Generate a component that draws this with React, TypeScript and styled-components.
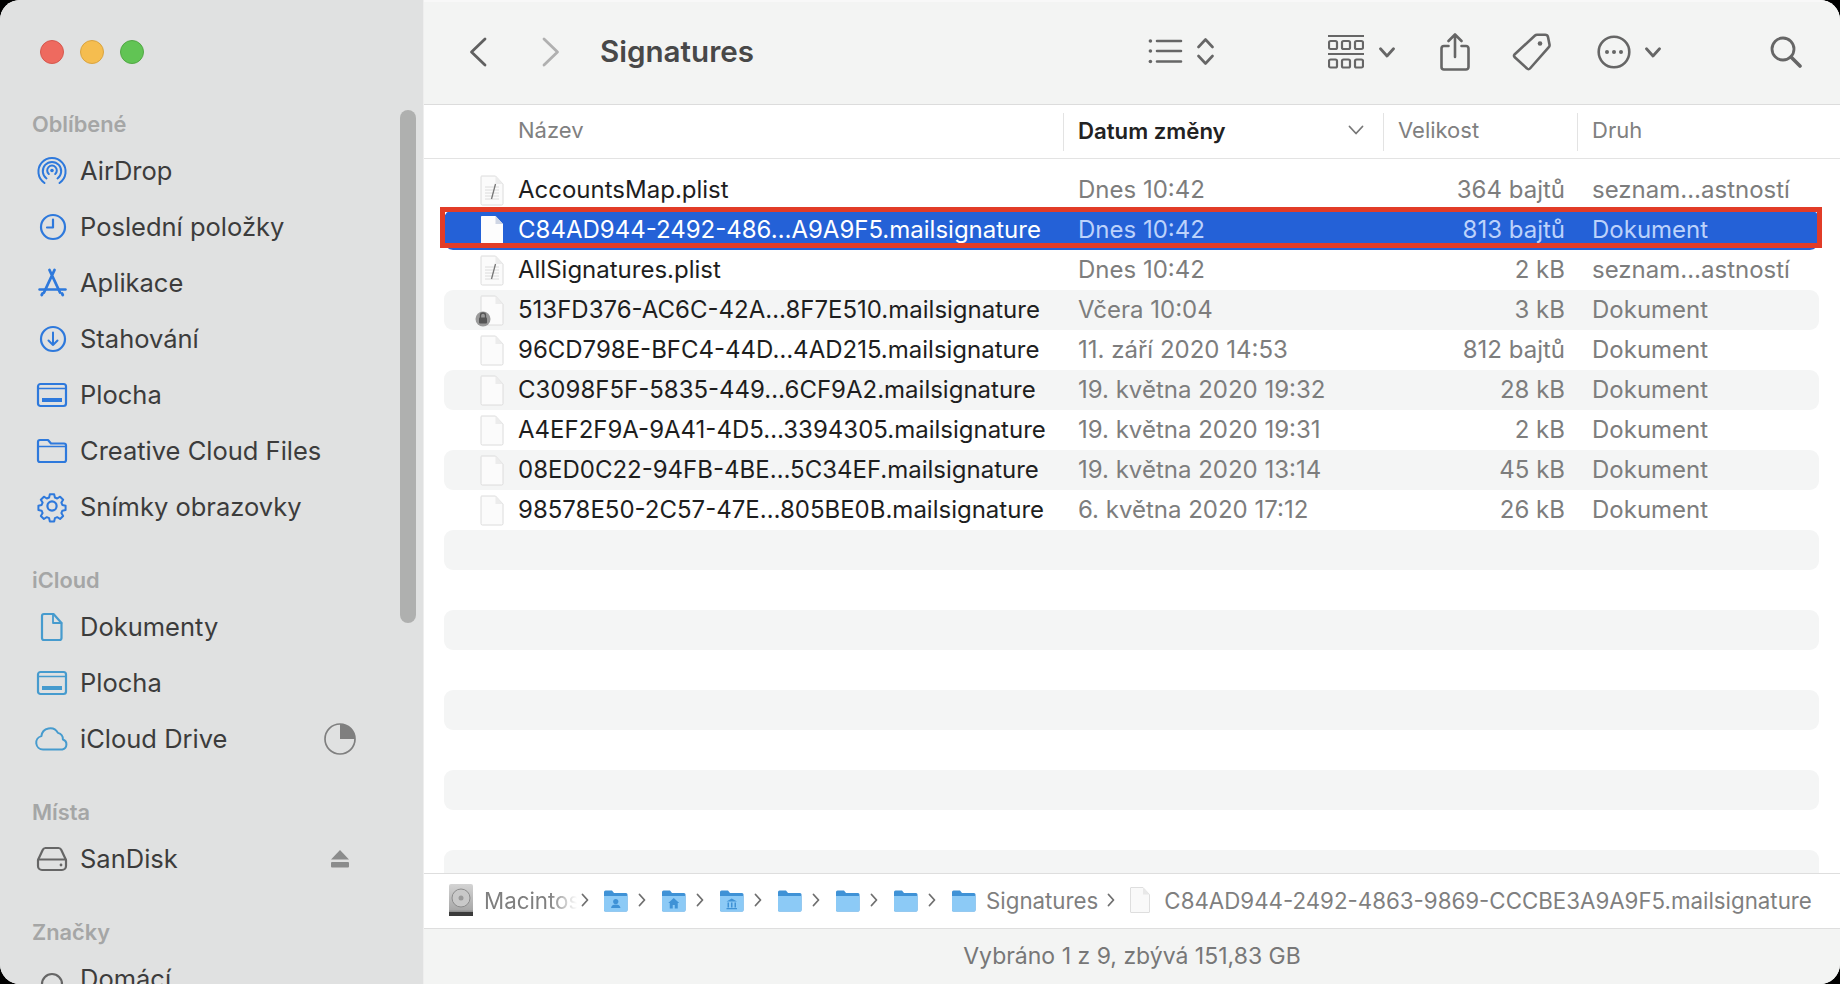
import React from "react";
import styled, { createGlobalStyle, css } from "styled-components";

const Global = createGlobalStyle`
  html, body { margin: 0; padding: 0; background: #000; }
  body { width: 1840px; height: 984px; overflow: hidden; font-family: Inter, "Liberation Sans", sans-serif; -webkit-font-smoothing: antialiased; }
  #root { width: 1840px; height: 984px; }
`;

const Window = styled.div`
  width: 1840px; height: 984px; display: flex; overflow: hidden; border-radius: 20px; background: #fff;
`;
const Sidebar = styled.aside`
  position: relative; width: 424px; height: 984px; flex: none; box-sizing: border-box; background: #e0e1e1;
  border-right: 1px solid #eeeeee; overflow: hidden; padding-top: 105px; display: flex; flex-direction: column; gap: 26px;
`;
const Lights = styled.div`
  position: absolute; left: 40px; top: 40px; display: flex; gap: 16px;
`;
const Light = styled.span<{ $c: string; $b: string }>`
  width: 24px; height: 24px; border-radius: 50%; box-sizing: border-box; background: ${p => p.$c}; border: 1px solid ${p => p.$b};
`;
const Scroll = styled.div`
  position: absolute; left: 400px; top: 110px; width: 16px; height: 513px; border-radius: 8px; background: #afb0af;
`;
const Section = styled.section`
  display: flex; flex-direction: column;
`;
const SectionLabel = styled.div`
  height: 38px; line-height: 38px; padding-left: 32px; font-size: 21.8px; font-weight: 600; color: #a5a6a6;
`;
const Item = styled.div`
  height: 56px; flex: none; display: flex; align-items: center; position: relative; padding-left: 34px; gap: 10px;
  font-size: 25.5px; color: #3c3c3c;
`;
const ItemText = styled.span`
  margin-bottom: 2px;
`;
const ItemIcon = styled.span`
  width: 36px; height: 36px; flex: none; display: flex; align-items: center; justify-content: center;
`;
const Trail = styled.span`
  position: absolute; left: 322px; top: 10px; width: 36px; height: 36px; display: flex; align-items: center; justify-content: center;
`;

const Main = styled.main`
  flex: 1; min-width: 0; height: 984px; display: flex; flex-direction: column;
`;
const Toolbar = styled.header`
  height: 105px; flex: none; box-sizing: border-box; background: #f3f4f3; border-top: 2px solid #f8f8f8; border-bottom: 1.5px solid #dcdcdc; position: relative;
`;
const Tool = styled.span<{ $l: number }>`
  position: absolute; left: ${p => p.$l}px; top: 0; height: 100px; display: flex; align-items: center;
`;
const Title = styled.h1`
  margin: 0; position: absolute; left: 176px; top: 0; line-height: 98px; font-size: 29.6px; font-weight: 600; color: #484848;
`;
const Head = styled.div`
  height: 54px; flex: none; box-sizing: border-box; border-bottom: 1.5px solid #e3e3e3; display: grid; grid-template-columns: 639px 320px 194px 1fr; align-items: center;
  background: #fff;
`;
const HeadCell = styled.div<{ $first?: boolean; $active?: boolean }>`
  height: 38px; box-sizing: border-box; display: flex; align-items: center; justify-content: space-between;
  padding-left: ${p => (p.$first ? 94 : 14)}px; padding-right: 19px; padding-bottom: 3px;
  border-left: ${p => (p.$first ? "none" : "1.5px solid #e3e3e3")};
  font-size: ${p => (p.$active ? 22.2 : 22)}px; font-weight: ${p => (p.$active ? 600 : 400)}; color: ${p => (p.$active ? "#222" : "#808080")};
`;
const List = styled.div`
  flex: 1; min-height: 0; overflow: hidden; padding: 11px 21px 0 20px; display: flex; flex-direction: column;
`;
const Row = styled.div<{ $stripe?: boolean; $sel?: boolean }>`
  position: relative; height: 40px; flex: none; border-radius: 9px; display: grid; align-items: center;
  grid-template-columns: 36px 38px 560px 486px 27px 1fr;
  background: ${p => (p.$sel ? "#2461d7" : p.$stripe ? "#f4f5f5" : "#fff")};
  font-size: 24px; white-space: nowrap;
  color: ${p => (p.$sel ? "#bcd2fb" : "#7d7d7d")};
`;
const cellText = css`
  grid-row: 1; margin-bottom: 2px;
`;
const RowIcon = styled.span`
  grid-column: 2; grid-row: 1; display: flex; align-items: center; height: 40px;
`;
const Name = styled.span<{ $sel?: boolean }>`
  ${cellText}
  grid-column: 3; color: ${p => (p.$sel ? "#fff" : "#1e1e1e")};
`;
const DateCell = styled.span`
  ${cellText}
  grid-column: 4;
`;
const Size = styled.span`
  ${cellText}
  grid-column: 4 / 6; justify-self: end; margin-right: 26px;
`;
const Kind = styled.span`
  ${cellText}
  grid-column: 6; margin-left: 1px;
`;
const Mark = styled.div`
  position: absolute; left: -4px; right: -3px; top: -3px; bottom: 2px; border: 5px solid #e23c27; pointer-events: none;
`;
const PathBar = styled.div`
  height: 56px; flex: none; box-sizing: border-box; border-top: 1.5px solid #dedede; border-bottom: 1.5px solid #dedede; background: #fff;
  display: flex; align-items: center; padding: 0 0 2px 24px; font-size: 22.3px; color: #7f7f7f; white-space: nowrap;
`;
const Crumb = styled.span`
  display: flex; align-items: center; flex: none;
`;
const FadeText = styled.span`
  width: 93px; margin-left: 10px; overflow: hidden;
  -webkit-mask-image: linear-gradient(90deg, #000 70%, transparent 100%);
  mask-image: linear-gradient(90deg, #000 70%, transparent 100%);
`;
const CrumbText = styled.span<{ $gap: number }>`
  margin-left: ${p => p.$gap}px;
`;
const Sep = styled.svg<{ $l: number; $r: number }>`
  width: 8px; height: 14px; flex: none; margin-left: ${p => p.$l}px; margin-right: ${p => p.$r}px;
`;
const Status = styled.footer`
  height: 55px; flex: none; background: #f3f4f3; display: flex; align-items: center; justify-content: center; font-size: 23px; color: #777; padding-bottom: 2px; box-sizing: border-box;
`;

const blue = "#2e79dc";
const teal = "#469bce";

const Svg = ({ w = 34, h = 34, c = blue, sw = 2.2, children }: { w?: number; h?: number; c?: string; sw?: number; children: React.ReactNode }) => (
  <svg width={w} height={h} viewBox={`0 0 ${w} ${h}`} fill="none" stroke={c} strokeWidth={sw} strokeLinecap="round" strokeLinejoin="round">{children}</svg>
);

const AirDropI = () => (
  <Svg sw={2}><path d="M9.5 29a13.6 13.6 0 1 1 15 0" /><path d="M11.5 24.5a9.2 9.2 0 1 1 11 0" /><path d="M13.8 20a4.8 4.8 0 1 1 6.4 0" /><circle cx="17" cy="16.5" r="1.8" fill={blue} stroke="none" /></Svg>
);
const ClockI = () => (
  <Svg><circle cx="18" cy="17" r="12" /><path d="M18 9.5v8h-6" /></Svg>
);
const AppI = () => (
  <Svg><path d="M14.5 4l10.5 22.5M19.5 4L9 26.5" strokeWidth="2.8" /><path d="M4.5 23.5h26" strokeWidth="2.5" /><path d="M7.5 27.5l-.8 1.5M27 27.5l.8 1.5" strokeWidth="2.8" /></Svg>
);
const DownI = () => (
  <Svg><circle cx="18" cy="17" r="12" /><path d="M18 10.5v12.5M13.5 18.5l4.5 4.5 4.5-4.5" strokeWidth="2" /></Svg>
);
const DesktopI = ({ c = blue }: { c?: string }) => (
  <Svg c={c}><rect x="3" y="6" width="28" height="22" rx="2.5" /><path d="M3 10.5h28" strokeWidth="1.5" /><rect x="7" y="20" width="20" height="4" fill={c} stroke="none" /></Svg>
);
const FolderI = () => (
  <Svg><path d="M3 26V8a2 2 0 0 1 2-2h8l3 3.5h13a2 2 0 0 1 2 2V26a2 2 0 0 1-2 2H5a2 2 0 0 1-2-2z" /><path d="M3 12.5h28" strokeWidth="1.6" /></Svg>
);
const GearI = () => (
  <Svg sw={2.2}><path d="M14.6 4.5h4.8l.8 3.6 2.6 1.1 3.2-2 3.4 3.4-2 3.2 1.1 2.6 3.6.8v4.8l-3.6.8-1.1 2.6 2 3.2-3.4 3.4-3.2-2-2.6 1.1-.8 3.6h-4.8l-.8-3.6-2.6-1.1-3.2 2-3.4-3.4 2-3.2-1.1-2.6-3.6-.8v-4.8l3.6-.8 1.1-2.6-2-3.2 3.4-3.4 3.2 2 2.6-1.1z" transform="translate(1.7 .2) scale(.9)" /><circle cx="17" cy="16" r="4.6" /></Svg>
);
const DocI = () => (
  <Svg c={teal}><path d="M9 4h9.5l8 9v15a2 2 0 0 1-2 2H9a2 2 0 0 1-2-2V6a2 2 0 0 1 2-2z" /><path d="M18 4v9h8.5" strokeWidth="1.8" /></Svg>
);
const CloudI = () => (
  <Svg w={36} c={teal}><path d="M9 27.5a6.8 6.8 0 0 1-1.6-13.4 8.8 8.8 0 0 1 16.5-3.2 6.6 6.6 0 0 1 5 6.6 5.2 5.2 0 0 1-.6 10H9z" strokeWidth="2" /></Svg>
);
const DiskI = () => (
  <Svg c="#666" sw={2.2}><path d="M10.5 6h13a3 3 0 0 1 2.7 1.8L31 18v6a4 4 0 0 1-4 4H7a4 4 0 0 1-4-4v-6l4.8-10.2A3 3 0 0 1 10.5 6z" /><path d="M3.5 17.5h27" /><circle cx="26" cy="23" r="1.4" fill="#666" stroke="none" /></Svg>
);
const TagDotI = () => (
  <Svg c="#666"><circle cx="17" cy="22" r="10" /></Svg>
);
const PieI = () => (
  <svg width="34" height="34" viewBox="0 0 34 34"><circle cx="17" cy="17" r="15" fill="none" stroke="#7f7f7f" strokeWidth="1.7" /><path d="M17 2a15 15 0 0 1 15 15H17z" fill="#7f7f7f" /></svg>
);
const EjectI = () => (
  <svg width="20" height="18" viewBox="0 0 20 18" fill="#8b8c8c"><path d="M10 0l9 9.5H1z" /><rect x="1" y="12" width="18" height="5.5" rx="1" /></svg>
);

const Back = () => (
  <svg width="20" height="32" viewBox="0 0 20 32" fill="none" stroke="#606060" strokeWidth="2.8" strokeLinecap="round" strokeLinejoin="round"><path d="M17 3L3.5 16 17 29" /></svg>
);
const Forward = () => (
  <svg width="20" height="32" viewBox="0 0 20 32" fill="none" stroke="#b0b0b0" strokeWidth="2.8" strokeLinecap="round" strokeLinejoin="round"><path d="M3 3l13.5 13L3 29" /></svg>
);
const ListI = () => (
  <svg width="66" height="30" viewBox="0 0 66 30" fill="none" stroke="#666" strokeWidth="2.6" strokeLinecap="round" strokeLinejoin="round">
    <path d="M9 4h24M9 14h24M9 24.5h24" /><circle cx="2.4" cy="4" r="1.8" fill="#666" stroke="none" /><circle cx="2.4" cy="14" r="1.8" fill="#666" stroke="none" /><circle cx="2.4" cy="24.5" r="1.8" fill="#666" stroke="none" />
    <path d="M50.5 10l7-7.5 7 7.5M50.5 19l7 7.5 7-7.5" />
  </svg>
);
const Chev = () => (
  <svg width="16" height="11" viewBox="0 0 16 11" fill="none" stroke="#666" strokeWidth="2.8" strokeLinecap="round" strokeLinejoin="round"><path d="M1.5 1.8L8 9l6.5-7.2" /></svg>
);
const GridI = () => (
  <svg width="36" height="34" viewBox="0 0 36 34" fill="none" stroke="#666" strokeWidth="2.2">
    <path d="M0 1h36M0 19h36" />
    {[0, 13, 26].map(x => <rect key={x} x={x + 1} y="6" width="8" height="8" rx="1.6" />)}
    {[0, 13, 26].map(x => <rect key={x + 100} x={x + 1} y="24.5" width="8" height="8" rx="1.6" />)}
  </svg>
);
const ShareI = () => (
  <svg width="30" height="38" viewBox="0 0 30 38" fill="none" stroke="#666" strokeWidth="2.6" strokeLinecap="round" strokeLinejoin="round">
    <path d="M8.5 13H4a2.5 2.5 0 0 0-2.5 2.5v18.500A2.5 2.5 0 0 0 4 36.500h22a2.5 2.5 0 0 0 2.5-2.5V15.500A2.5 2.5 0 0 0 26 13h-4.500" />
    <path d="M15 24V2M8.5 8L15 1.500 21.500 8" />
  </svg>
);
const TagI = () => (
  <svg width="40" height="38" viewBox="0 0 40 38" fill="none" stroke="#666" strokeWidth="2.6" strokeLinejoin="round">
    <path d="M2.5 21.500L23 2.500a3 3 0 0 1 2-.8h8a3 3 0 0 1 3 2.300l1.500 7.500a3 3 0 0 1-.9 2.800L18 35.500a2 2 0 0 1-3 0L2.500 24a2 2 0 0 1 0-2.500z" />
    <circle cx="28" cy="10.500" r="2.300" fill="#666" stroke="none" />
  </svg>
);
const MoreI = () => (
  <svg width="34" height="34" viewBox="0 0 34 34" fill="none" stroke="#666" strokeWidth="2.6">
    <circle cx="17" cy="17" r="15.300" />
    <circle cx="10" cy="17" r="2" fill="#666" stroke="none" /><circle cx="17" cy="17" r="2" fill="#666" stroke="none" /><circle cx="24" cy="17" r="2" fill="#666" stroke="none" />
  </svg>
);
const SearchI = () => (
  <svg width="32" height="32" viewBox="0 0 32 32" fill="none" stroke="#666" strokeWidth="2.8" strokeLinecap="round">
    <circle cx="13" cy="13" r="11" /><path d="M21 21l9 9" strokeWidth="3.6" />
  </svg>
);
const SortChev = () => (
  <svg width="16" height="10" viewBox="0 0 16 10" fill="none" stroke="#777" strokeWidth="1.8" strokeLinecap="round" strokeLinejoin="round"><path d="M1.5 1.5L8 8.500l6.500-7" /></svg>
);

const FileIcon = ({ kind }: { kind: "doc" | "plist" | "lock" | "sel" }) => (
  <svg width="24" height="31" viewBox="0 0 24 31" style={{ overflow: "visible" }}>
    <path d="M1.5 1h14L23 9v19.500a1.5 1.5 0 0 1-1.5 1.500h-19A1.5 1.5 0 0 1 1 28.500V2a1 1 0 0 1 .5-1z" fill={kind === "sel" ? "#fdfdfd" : "#fbfbfb"} stroke={kind === "sel" ? "none" : "#dcdcdc"} />
    <path d="M15.5 1v8H23z" fill={kind === "sel" ? "#cfd6e4" : "#ececec"} />
    {kind === "plist" && (
      <g>
        <path d="M5 12h14M5 15h14M5 18h14M5 21h14M5 24h14" stroke="#dcdcdc" strokeWidth="1" />
        <path d="M15.5 9L11.500 24" stroke="#777" strokeWidth="1.3" />
      </g>
    )}
    {kind === "lock" && (
      <g>
        <circle cx="3" cy="24" r="7.500" fill="#9a9a9a" />
        <path d="M0.5 23v-2.500a2.5 2.5 0 0 1 5 0V23" fill="none" stroke="#555" strokeWidth="1.3" />
        <rect x="-1" y="22.500" width="8" height="6" rx="1" fill="#555" />
      </g>
    )}
  </svg>
);

const CrumbFolder = ({ g }: { g?: "user" | "home" | "lib" }) => (
  <svg width="25" height="25" viewBox="0 0 25 25">
    <path d="M1 4a1.5 1.5 0 0 1 1.5-1.500h6.500l2 2.500h12A1.5 1.5 0 0 1 24.500 6.500V22a1.5 1.5 0 0 1-1.5 1.500H2.500A1.5 1.5 0 0 1 1 22z" fill="#3f92d6" />
    <path d="M1 8h23.500v14a1.5 1.5 0 0 1-1.5 1.500H2.500A1.5 1.5 0 0 1 1 22z" fill="#8ccaf6" />
    {g === "user" && (<g fill="#3f92d6"><circle cx="12.750" cy="13.500" r="2.600" /><path d="M8 20a4.800 4 0 0 1 9.500 0z" /></g>)}
    {g === "home" && (<path d="M12.750 10l5.500 5h-1.500v5.500h-3V17h-2v3.500h-3V15h-1.500z" fill="#3f92d6" />)}
    {g === "lib" && (<path d="M7.500 13.500l5.250-3 5.250 3zM8.500 14.500h1.500v5h-1.500zM12 14.500h1.500v5H12zM15.500 14.500H17v5h-1.500zM7.500 20h10.500v1.200H7.500z" fill="#3f92d6" />)}
  </svg>
);
const HddI = () => (
  <svg width="26" height="34" viewBox="0 0 26 34">
    <defs><linearGradient id="hd" x1="0" y1="0" x2="0" y2="1"><stop offset="0" stopColor="#d4d4d4" /><stop offset=".8" stopColor="#a9a9a9" /><stop offset="1" stopColor="#555" /></linearGradient></defs>
    <rect x="1" y="1" width="24" height="32" rx="2" fill="url(#hd)" />
    <circle cx="13" cy="15" r="9" fill="#c9c9c9" stroke="#8d8d8d" />
    <circle cx="13" cy="15" r="2.500" fill="#9a9a9a" />
    <rect x="1" y="29" width="24" height="4" fill="#3a3a3a" />
  </svg>
);
const FileSmall = () => (
  <svg width="20" height="26" viewBox="0 0 20 26">
    <path d="M1 .5h12l6.500 7V25a.5.5 0 0 1-.5.5H1a.5.5 0 0 1-.5-.5V1A.5.5 0 0 1 1 .5z" fill="#f9f9f9" stroke="#dedede" />
    <path d="M13 .5v7h6.500z" fill="#e8e8e8" />
  </svg>
);
const PathChev = ({ l, r }: { l: number; r: number }) => (
  <Sep $l={l} $r={r} viewBox="0 0 8 14" fill="none" stroke="#6f6f6f" strokeWidth="1.8" strokeLinecap="round" strokeLinejoin="round"><path d="M1.5 1.500L6.500 7l-5 5.500" /></Sep>
);

type F = { name: string; date: string; size: string; kind: string; icon: "doc" | "plist" | "lock" | "sel" };
const files: F[] = [
  { name: "AccountsMap.plist", date: "Dnes 10:42", size: "364 bajtů", kind: "seznam…astností", icon: "plist" },
  { name: "C84AD944-2492-486…A9A9F5.mailsignature", date: "Dnes 10:42", size: "813 bajtů", kind: "Dokument", icon: "sel" },
  { name: "AllSignatures.plist", date: "Dnes 10:42", size: "2 kB", kind: "seznam…astností", icon: "plist" },
  { name: "513FD376-AC6C-42A…8F7E510.mailsignature", date: "Včera 10:04", size: "3 kB", kind: "Dokument", icon: "lock" },
  { name: "96CD798E-BFC4-44D…4AD215.mailsignature", date: "11. září 2020 14:53", size: "812 bajtů", kind: "Dokument", icon: "doc" },
  { name: "C3098F5F-5835-449…6CF9A2.mailsignature", date: "19. května 2020 19:32", size: "28 kB", kind: "Dokument", icon: "doc" },
  { name: "A4EF2F9A-9A41-4D5…3394305.mailsignature", date: "19. května 2020 19:31", size: "2 kB", kind: "Dokument", icon: "doc" },
  { name: "08ED0C22-94FB-4BE…5C34EF.mailsignature", date: "19. května 2020 13:14", size: "45 kB", kind: "Dokument", icon: "doc" },
  { name: "98578E50-2C57-47E…805BE0B.mailsignature", date: "6. května 2020 17:12", size: "26 kB", kind: "Dokument", icon: "doc" },
];

const SideItem = ({ icon, label, trail }: { icon: React.ReactNode; label: string; trail?: React.ReactNode }) => (
  <Item><ItemIcon>{icon}</ItemIcon><ItemText>{label}</ItemText>{trail && <Trail>{trail}</Trail>}</Item>
);

export default function App() {
  return (
    <Window>
      <Global />
      <Sidebar>
        <Lights>
          <Light $c="#ee6a5f" $b="#d5584e" />
          <Light $c="#f5bd4f" $b="#d9a441" />
          <Light $c="#61c454" $b="#52a845" />
        </Lights>
        <Section>
          <SectionLabel>Oblíbené</SectionLabel>
          <SideItem icon={<AirDropI />} label="AirDrop" />
          <SideItem icon={<ClockI />} label="Poslední položky" />
          <SideItem icon={<AppI />} label="Aplikace" />
          <SideItem icon={<DownI />} label="Stahování" />
          <SideItem icon={<DesktopI />} label="Plocha" />
          <SideItem icon={<FolderI />} label="Creative Cloud Files" />
          <SideItem icon={<GearI />} label="Snímky obrazovky" />
        </Section>
        <Section>
          <SectionLabel>iCloud</SectionLabel>
          <SideItem icon={<DocI />} label="Dokumenty" />
          <SideItem icon={<DesktopI c={teal} />} label="Plocha" />
          <SideItem icon={<CloudI />} label="iCloud Drive" trail={<PieI />} />
        </Section>
        <Section>
          <SectionLabel>Místa</SectionLabel>
          <SideItem icon={<DiskI />} label="SanDisk" trail={<EjectI />} />
        </Section>
        <Section>
          <SectionLabel>Značky</SectionLabel>
          <SideItem icon={<TagDotI />} label="Domácí" />
        </Section>
        <Scroll />
      </Sidebar>
      <Main>
        <Toolbar>
          <Tool $l={44}><Back /></Tool>
          <Tool $l={117}><Forward /></Tool>
          <Title>Signatures</Title>
          <Tool $l={724}><ListI /></Tool>
          <Tool $l={904}><GridI /></Tool>
          <Tool $l={955}><Chev /></Tool>
          <Tool $l={1016}><ShareI /></Tool>
          <Tool $l={1088}><TagI /></Tool>
          <Tool $l={1173}><MoreI /></Tool>
          <Tool $l={1221}><Chev /></Tool>
          <Tool $l={1346}><SearchI /></Tool>
        </Toolbar>
        <Head>
          <HeadCell $first>Název</HeadCell>
          <HeadCell $active>Datum změny<SortChev /></HeadCell>
          <HeadCell>Velikost</HeadCell>
          <HeadCell>Druh</HeadCell>
        </Head>
        <List>
          {files.map((f, i) => {
            const sel = i === 1;
            return (
              <Row key={f.name} $sel={sel} $stripe={i % 2 === 1}>
                <RowIcon><FileIcon kind={f.icon} /></RowIcon>
                <Name $sel={sel}>{f.name}</Name>
                <DateCell>{f.date}</DateCell>
                <Size>{f.size}</Size>
                <Kind>{f.kind}</Kind>
                {sel && <Mark />}
              </Row>
            );
          })}
          {Array.from({ length: 9 }, (_, i) => <Row key={i} $stripe={i % 2 === 0} />)}
        </List>
        <PathBar>
          <Crumb><HddI /><FadeText>Macintosh HD</FadeText></Crumb>
          <PathChev l={4} r={14} />
          <Crumb><CrumbFolder g="user" /></Crumb>
          <PathChev l={10} r={15} />
          <Crumb><CrumbFolder g="home" /></Crumb>
          <PathChev l={10} r={15} />
          <Crumb><CrumbFolder g="lib" /></Crumb>
          <PathChev l={10} r={15} />
          <Crumb><CrumbFolder /></Crumb>
          <PathChev l={10} r={15} />
          <Crumb><CrumbFolder /></Crumb>
          <PathChev l={10} r={15} />
          <Crumb><CrumbFolder /></Crumb>
          <PathChev l={10} r={15} />
          <Crumb><CrumbFolder /><CrumbText $gap={10}>Signatures</CrumbText></Crumb>
          <PathChev l={9} r={15} />
          <Crumb><FileSmall /><CrumbText $gap={14}>C84AD944-2492-4863-9869-CCCBE3A9A9F5.mailsignature</CrumbText></Crumb>
        </PathBar>
        <Status>Vybráno 1 z 9, zbývá 151,83 GB</Status>
      </Main>
    </Window>
  );
}
